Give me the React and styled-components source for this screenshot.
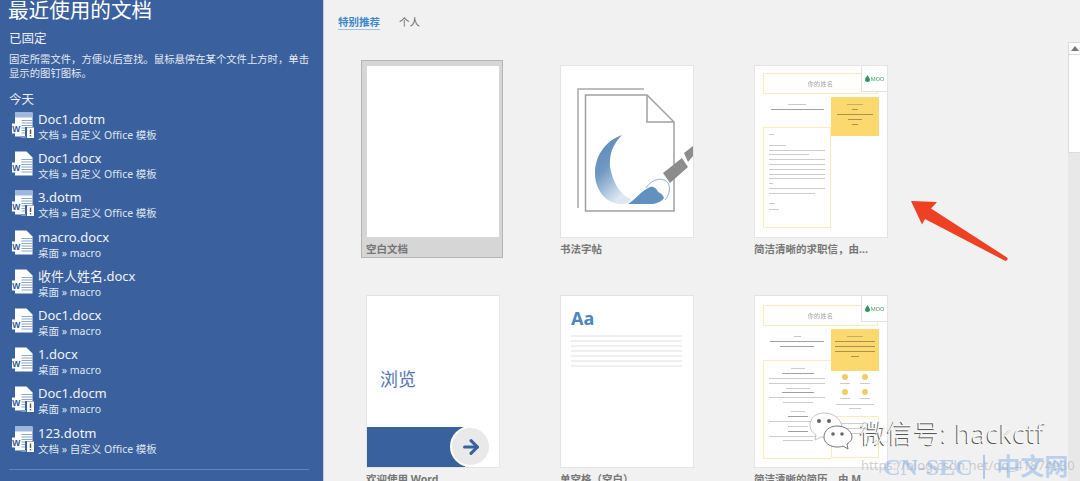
import React from 'react'
import styled, { createGlobalStyle } from 'styled-components'
import { ArrowRight } from 'lucide-react'

const recentFiles = [
  { name: 'Doc1.dotm', path: '文档 » 自定义 Office 模板', kind: 'template' },
  { name: 'Doc1.docx', path: '文档 » 自定义 Office 模板', kind: 'doc' },
  { name: '3.dotm', path: '文档 » 自定义 Office 模板', kind: 'template' },
  { name: 'macro.docx', path: '桌面 » macro', kind: 'doc' },
  { name: '收件人姓名.docx', path: '桌面 » macro', kind: 'doc' },
  { name: 'Doc1.docx', path: '桌面 » macro', kind: 'doc' },
  { name: '1.docx', path: '桌面 » macro', kind: 'doc' },
  { name: 'Doc1.docm', path: '桌面 » macro', kind: 'macro' },
  { name: '123.dotm', path: '文档 » 自定义 Office 模板', kind: 'template' },
]

const GlobalStyle = createGlobalStyle`
  html, body {
    margin: 0;
    padding: 0;
    overflow: hidden;
    background: #f1f1f1;
    font-family: "Noto Sans", "Noto Sans CJK SC", sans-serif;
  }
`

const Page = styled.div`
  position: relative;
  display: flex;
  width: 1080px;
  height: 481px;
  overflow: hidden;
`

const Sidebar = styled.aside`
  width: 324px;
  height: 481px;
  flex-shrink: 0;
  box-sizing: border-box;
  padding: 0 12px 0 9px;
  background: #3a609d;
  border-right: 1px solid #c3cfe2;
  color: #fff;
`

const Title = styled.h1`
  margin: 0 0 9px -1px;
  font-size: 20.6px;
  line-height: 21px;
  font-weight: 400;
`

const SectionLabel = styled.div`
  font-size: 12.5px;
  line-height: 18px;
  color: #eef2f8;
`

const Hint = styled.p`
  margin: 4px 0 11px;
  width: 302px;
  font-size: 10.35px;
  line-height: 14px;
  color: #e3e9f3;
`

const FileList = styled.div`
  display: flex;
  flex-direction: column;
  margin-top: 1px;
`

const FileRow = styled.div`
  display: flex;
  gap: 4px;
  height: 39.2px;
  padding: 1px 0 0 3px;
  align-items: flex-start;
  box-sizing: border-box;
`

const IconSlot = styled.div`
  margin-top: 1px;
  height: 27px;
`

const FileText = styled.div`
  display: flex;
  flex-direction: column;
`

const FileName = styled.div`
  font-size: 13px;
  line-height: 16px;
  color: #f0f3f8;
`

const FilePath = styled.div`
  font-size: 10.5px;
  line-height: 16px;
  color: #dfe6f1;
`

const Divider = styled.div`
  margin-top: 6px;
  width: 300px;
  height: 1px;
  background: #6585b6;
`

const Main = styled.main`
  flex: 1;
  display: flex;
  min-width: 0;
  background: #f1f1f1;
`

const Content = styled.div`
  flex: 1;
  padding: 15px 0 0 14px;
`

const Tabs = styled.nav`
  display: flex;
  gap: 19px;
  height: 45px;
`

const Tab = styled.span`
  height: 14px;
  font-size: 10.5px;
  line-height: 14px;
  font-weight: ${p => (p.$active ? 700 : 400)};
  color: ${p => (p.$active ? '#3f87c9' : '#666')};
  border-bottom: ${p => (p.$active ? '1px solid #9cc3e6' : 'none')};
`

const Gallery = styled.div`
  display: grid;
  grid-template-columns: repeat(3, 142px);
  grid-auto-rows: 198px;
  column-gap: 52px;
  row-gap: 32px;
  margin-left: 23px;
`

const Card = styled.div`
  box-sizing: border-box;
  padding: 4px;
  border: 1px solid ${p => (p.$selected ? '#b4b4b4' : 'transparent')};
  background: ${p => (p.$selected ? '#d6d6d6' : 'transparent')};
`

const Thumb = styled.div`
  position: relative;
  box-sizing: border-box;
  width: 134px;
  height: 173px;
  background: #fff;
  border: 1px solid ${p => (p.$selected ? '#d6d6d6' : '#e4e4e4')};
  overflow: hidden;
`

const CardLabel = styled.div`
  margin-top: 3px;
  font-size: 10.5px;
  line-height: 16px;
  font-weight: 700;
  color: #777;
  white-space: nowrap;
`

const BrowseWord = styled.div`
  padding: 71px 0 0 13px;
  font-size: 18px;
  line-height: 24px;
  color: #5577ae;
`

const BrowseBar = styled.div`
  position: absolute;
  left: 0;
  bottom: 0;
  width: 98px;
  height: 40px;
  background: #38619e;
`

const BrowseCircle = styled.div`
  position: absolute;
  right: 8px;
  bottom: 0;
  width: 37px;
  height: 37px;
  display: flex;
  align-items: center;
  justify-content: center;
  border-radius: 50%;
  background: #e9e9e9;
  border: 2px solid #fff;
  color: #38619e;
`

const SpacedHead = styled.div`
  padding: 12px 0 0 10px;
  font-size: 18px;
  line-height: 20px;
  font-weight: 700;
  color: #4a86c0;
`

const RuleStack = styled.div`
  display: flex;
  flex-direction: column;
  gap: 3.5px;
  margin: 7px 11px 0 10px;
`

const Rule = styled.div`
  height: 1.5px;
  background: #efefef;
`

const Resume = styled.div`
  padding: ${p => p.$top}px 9px 0 8px;
`

const ResumeFlow = styled.div`
  filter: blur(0.45px);
`

const NameBox = styled.div`
  height: 19px;
  display: flex;
  align-items: center;
  justify-content: center;
  border: 1px solid #fdebbd;
  font-size: 6px;
  color: #a5a5a5;
  letter-spacing: 0.4px;
`

const LogoTab = styled.div`
  position: absolute;
  top: 0;
  right: 0;
  width: 26px;
  height: 26px;
  display: flex;
  align-items: center;
  justify-content: center;
  gap: 1px;
  box-sizing: border-box;
  background: #fff;
  border-left: 1px solid #e2e2e2;
  border-bottom: 1px solid #e2e2e2;
  font-size: 5.5px;
  color: #3f9a6c;
`

const ResumeBody = styled.div`
  display: grid;
  grid-template-columns: 68px 48px;
  margin-top: 3px;
`

const ResumeColumn = styled.div`
  display: flex;
  flex-direction: column;
`

const Intro = styled.div`
  height: ${p => p.$h}px;
  box-sizing: border-box;
  padding-top: 7px;
  display: flex;
  flex-direction: column;
  align-items: center;
  gap: 4px;
`

const LetterBox = styled.div`
  height: ${p => p.$h}px;
  box-sizing: border-box;
  padding: ${p => p.$pad}px 5px 0;
  display: flex;
  flex-direction: column;
  gap: ${p => p.$gap}px;
  border: 1px solid #fdebbd;
  border-right-width: ${p => (p.$open ? 0 : 1)}px;
`

const YellowPanel = styled.div`
  height: ${p => p.$h}px;
  box-sizing: border-box;
  padding: 7px 4px 0;
  display: flex;
  flex-direction: column;
  align-items: center;
  gap: 4px;
  background: #fbd96f;
`

const Line = styled.div`
  flex-shrink: 0;
  width: ${p => p.$w}px;
  height: 1px;
  background: ${p => p.$c || '#cdcdcd'};
  margin-top: ${p => p.$top || 0}px;
  align-self: ${p => p.$align || 'auto'};
`

const SkillGrid = styled.div`
  display: grid;
  grid-template-columns: 20px 20px;
  justify-content: center;
  row-gap: 5px;
  padding-top: 3px;
`

const Skill = styled.div`
  display: flex;
  flex-direction: column;
  align-items: center;
  gap: 3px;
`

const SkillDot = styled.div`
  width: 6px;
  height: 6px;
  border-radius: 50%;
  background: #f0cd68;
`

const CaptionBlock = styled.div`
  display: flex;
  flex-direction: column;
  align-items: center;
  gap: 3px;
  padding-top: 5px;
`

const SmallBox = styled.div`
  height: 42px;
  margin-top: 7px;
  box-sizing: border-box;
  border: 1px solid #fdebbd;
  padding: 6px 4px;
  display: flex;
  flex-direction: column;
  align-items: center;
  gap: 4px;
`

const Scrollbar = styled.div`
  width: 12px;
  flex-shrink: 0;
  display: flex;
  flex-direction: column;
  padding-top: 42px;
`

const ScrollButton = styled.div`
  height: 13px;
  box-sizing: border-box;
  display: flex;
  align-items: center;
  justify-content: center;
  background: #fff;
  border: 1px solid #dcdcdc;
  border-right: none;
`

const ScrollThumb = styled.div`
  height: 98px;
  box-sizing: border-box;
  background: #fff;
  border: 1px solid #dcdcdc;
  border-top: none;
  border-right: none;
`

const ScrollTrack = styled.div`
  flex: 1;
  background: #e8e8e8;
`

const ArrowMark = styled.svg`
  position: absolute;
  left: 905px;
  top: 196px;
`

const WechatMark = styled.svg`
  position: absolute;
  left: 808px;
  top: 411px;
`

const WechatText = styled.div`
  position: absolute;
  left: 860px;
  top: 415px;
  font-size: 26px;
  line-height: 36px;
  font-weight: 300;
  letter-spacing: 0.8px;
  color: #f8f8f8;
  text-shadow: -1px 1px 0 #555;
  white-space: nowrap;
`

const CsdnUrl = styled.div`
  position: absolute;
  left: 861px;
  top: 456px;
  font-size: 13px;
  line-height: 18px;
  color: rgba(170, 170, 170, 0.55);
  white-space: nowrap;
`

const SiteMark = styled.div`
  position: absolute;
  left: 883px;
  top: 453px;
  display: flex;
  align-items: center;
  gap: 11px;
  height: 28px;
  font-family: "Liberation Serif", "Noto Sans CJK SC", serif;
  font-size: 24px;
  line-height: 28px;
  font-weight: 700;
  color: rgba(130, 175, 232, 0.5);
  white-space: nowrap;
`

const SiteBar = styled.span`
  width: 2px;
  height: 24px;
  background: rgba(130, 175, 232, 0.6);
`

const DocIcon = ({ kind }) => {
  const rows = [8, 10.5, 13, 15.5, 18, 20.5]
  return (
    <svg width="22" height="27" viewBox="0 0 22 27">
      {kind === 'template' ? (
        <>
          <path d="M3 0.5H20.5V24.5H3Z" fill="#fff" />
          <rect x="3" y="0.5" width="17.5" height="5" fill="#9db8dc" />
        </>
      ) : (
        <path d="M3 0.5H14.5L20.5 6.5V24.5H3Z" fill="#fff" />
      )}
      {rows.map(y => (
        <rect key={y} x="9.5" y={y} width="11" height="1" fill="#8ea6c9" />
      ))}
      <rect x="0" y="11.5" width="8.5" height="10" fill="#fff" />
      <text x="4.2" y="19.6" textAnchor="middle" fontSize="8.5" fontWeight="700" fill="#2f5a9a" fontFamily="Liberation Sans, sans-serif">W</text>
      {kind !== 'doc' && (
        <>
          <rect x="13" y="15" width="9" height="12" fill="#3a609d" />
          <rect x="15" y="15.5" width="7" height="10.5" fill="#fff" />
          <rect x="17.8" y="17.5" width="1.4" height="4.5" fill="#555" />
          <rect x="17.8" y="23" width="1.4" height="1.4" fill="#555" />
          <rect x="9" y="24" width="5" height="2" fill="#7d9ac6" />
        </>
      )}
    </svg>
  )
}

const CalligraphyArt = () => (
  <svg width="132" height="171" viewBox="0 0 132 171">
    <defs>
      <linearGradient id="ink" x1="0" y1="0" x2="0.5" y2="1">
        <stop offset="0" stopColor="#5a88b9" />
        <stop offset="0.5" stopColor="#6f98c3" />
        <stop offset="1" stopColor="#dfe8f2" />
      </linearGradient>
    </defs>
    <path d="M17 142V23H83" fill="none" stroke="#a8a8a8" strokeWidth="1.5" />
    <path d="M24.5 145V29H86L113 56V145Z" fill="none" stroke="#a0a0a0" strokeWidth="1.5" />
    <path d="M86 29V56H113" fill="none" stroke="#a0a0a0" strokeWidth="1.5" />
    <path d="M61 69C44 75 34 90 34 107C34 126 47 139 62 138C65 138 68 136 70 133C60 129 52 118 49 101C48 88 52 78 61 69Z" fill="url(#ink)" />
    <path d="M85 122C91 112 103 111 107 117C110 122 108 130 104 134" fill="#fff" stroke="#8fb0d4" strokeWidth="1" />
    <path d="M67 138C76 132 80 125 89 121C93 120 96 123 97 126C100 127 102 129 103 132C100 136 95 138 89 138Z" fill="#6290c1" />
    <path d="M102 107L121 92L127 101L109 117Z" fill="#8c8c8c" />
    <path d="M123 87L132 80V90L127 96Z" fill="#8c8c8c" />
  </svg>
)

const MooLogo = () => (
  <LogoTab>
    <svg width="5" height="7" viewBox="0 0 5 7">
      <path d="M2.5 0C3 1.5 5 2.5 5 5C5 6.2 4 7 2.5 7S0 6.2 0 5C0 2.5 2 1.5 2.5 0Z" fill="#2f9561" />
    </svg>
    MOO
  </LogoTab>
)

const CoverLetter = () => (
  <Resume $top={7}>
    <NameBox>你的姓名</NameBox>
    <ResumeBody>
      <ResumeColumn>
        <Intro $h={30}>
          <Line $w={18} $c="#c8c8c8" />
          <Line $w={53} $c="#a0a0a0" />
        </Intro>
        <LetterBox $h={101} $pad={6} $gap={3.8} $open={false}>
          <Line $w={5} />
          <Line $w={17} $top={6} />
          <Line $w={56} />
          <Line $w={40} />
          <Line $w={56} />
          <Line $w={56} />
          <Line $w={56} />
          <Line $w={56} />
          <Line $w={56} />
          <Line $w={4} />
          <Line $w={56} />
          <Line $w={46} />
          <Line $w={6} $top={5} />
          <Line $w={10} $top={2} />
        </LetterBox>
      </ResumeColumn>
      <ResumeColumn>
        <YellowPanel $h={39}>
          <Line $w={16} $c="#c2ae6c" />
          <Line $w={6} $c="#a5934f" />
          <Line $w={36} $c="#a5934f" />
          <Line $w={14} $c="#a5934f" />
          <Line $w={6} $c="#a5934f" />
        </YellowPanel>
      </ResumeColumn>
    </ResumeBody>
    <MooLogo />
  </Resume>
)

const CvSample = () => (
  <Resume $top={9}>
    <NameBox>你的姓名</NameBox>
    <ResumeBody>
      <ResumeColumn>
        <Intro $h={31}>
          <Line $w={7} $c="#c8c8c8" />
          <Line $w={54} $c="#a0a0a0" />
          <Line $w={34} $c="#a0a0a0" />
        </Intro>
        <LetterBox $h={99} $pad={7} $gap={3.9} $open>
          <Line $w={14} $align="center" />
          <Line $w={32} $c="#a0a0a0" $align="center" />
          <Line $w={56} />
          <Line $w={56} />
          <Line $w={24} $align="center" />
          <Line $w={32} $c="#a0a0a0" $align="center" />
          <Line $w={56} />
          <Line $w={30} $align="center" />
          <Line $w={14} $top={4} $align="center" />
          <Line $w={20} $c="#a0a0a0" $align="center" />
          <Line $w={56} />
          <Line $w={20} $align="center" />
          <Line $w={20} $c="#a0a0a0" $align="center" />
          <Line $w={56} />
          <Line $w={30} $align="center" />
        </LetterBox>
      </ResumeColumn>
      <ResumeColumn>
        <YellowPanel $h={42}>
          <Line $w={16} $c="#c2ae6c" />
          <Line $w={40} $c="#a5934f" />
          <Line $w={40} $c="#a5934f" />
          <Line $w={40} $c="#a5934f" />
          <Line $w={8} $c="#a5934f" />
        </YellowPanel>
        <SkillGrid>
          {[0, 1, 2, 3].map(i => (
            <Skill key={i}>
              <SkillDot />
              <Line $w={10} />
            </Skill>
          ))}
        </SkillGrid>
        <CaptionBlock>
          <Line $w={38} />
          <Line $w={12} />
        </CaptionBlock>
        <SmallBox>
          <Line $w={28} />
          <Line $w={38} />
          <Line $w={38} />
        </SmallBox>
      </ResumeColumn>
    </ResumeBody>
    <MooLogo />
  </Resume>
)

const App = () => {
  return (
    <Page>
      <GlobalStyle />
      <Sidebar>
        <Title>最近使用的文档</Title>
        <SectionLabel>已固定</SectionLabel>
        <Hint>固定所需文件，方便以后查找。鼠标悬停在某个文件上方时，单击显示的图钉图标。</Hint>
        <SectionLabel>今天</SectionLabel>
        <FileList>
          {recentFiles.map((file, i) => (
            <FileRow key={i}>
              <IconSlot>
                <DocIcon kind={file.kind} />
              </IconSlot>
              <FileText>
                <FileName>{file.name}</FileName>
                <FilePath>{file.path}</FilePath>
              </FileText>
            </FileRow>
          ))}
        </FileList>
        <Divider />
      </Sidebar>
      <Main>
        <Content>
          <Tabs>
            <Tab $active>特别推荐</Tab>
            <Tab>个人</Tab>
          </Tabs>
          <Gallery>
            <Card $selected>
              <Thumb $selected />
              <CardLabel>空白文档</CardLabel>
            </Card>
            <Card>
              <Thumb>
                <CalligraphyArt />
              </Thumb>
              <CardLabel>书法字帖</CardLabel>
            </Card>
            <Card>
              <Thumb>
                <ResumeFlow>
                  <CoverLetter />
                </ResumeFlow>
              </Thumb>
              <CardLabel>简洁清晰的求职信，由...</CardLabel>
            </Card>
            <Card>
              <Thumb>
                <BrowseWord>浏览</BrowseWord>
                <BrowseBar />
                <BrowseCircle>
                  <ArrowRight size={22} strokeWidth={3.4} />
                </BrowseCircle>
              </Thumb>
              <CardLabel>欢迎使用 Word</CardLabel>
            </Card>
            <Card>
              <Thumb>
                <SpacedHead>Aa</SpacedHead>
                <RuleStack>
                  {[0, 1, 2, 3, 4, 5, 6].map(i => <Rule key={i} />)}
                </RuleStack>
              </Thumb>
              <CardLabel>单空格（空白）</CardLabel>
            </Card>
            <Card>
              <Thumb>
                <ResumeFlow>
                  <CvSample />
                </ResumeFlow>
              </Thumb>
              <CardLabel>简洁清晰的简历，由 M</CardLabel>
            </Card>
          </Gallery>
        </Content>
        <Scrollbar>
          <ScrollButton>
            <svg width="8" height="5" viewBox="0 0 8 5"><path d="M4 0L8 5H0Z" fill="#777" /></svg>
          </ScrollButton>
          <ScrollThumb />
          <ScrollTrack />
        </Scrollbar>
      </Main>

      <ArrowMark width="110" height="70" viewBox="905 196 110 70">
        <path d="M911 201L937 202L931 208.5L1007 257.5Q1009 260 1005.5 261L925 219L922 224.5Z" fill="#ee4023" />
      </ArrowMark>

      <WechatMark width="46" height="42" viewBox="0 0 46 42">
        <path d="M16 2C7 2 2 8 2 14C2 19 5 22 8 24L7 29L13 26C15 26 17 27 19 26C22 18 30 14 34 16C33 8 26 2 16 2Z" fill="#fff" stroke="#b5b5b5" strokeWidth="0.8" />
        <path d="M29 15C21 15 16 20 16 26C16 32 22 36 29 36C31 36 33 36 35 35L40 38L39 33C42 31 44 29 44 26C44 20 37 15 29 15Z" fill="#fff" stroke="#777" strokeWidth="1" />
        <circle cx="11" cy="10" r="2" fill="#666" />
        <circle cx="21" cy="10" r="2" fill="#666" />
        <circle cx="25" cy="23" r="1.8" fill="#666" />
        <circle cx="34" cy="23" r="1.8" fill="#666" />
      </WechatMark>
      <WechatText>微信号: hackctf</WechatText>
      <CsdnUrl>https://blog.csdn.net/qq_41874930</CsdnUrl>
      <SiteMark>CN-SEC<SiteBar />中文网</SiteMark>
    </Page>
  )
}

export default App
